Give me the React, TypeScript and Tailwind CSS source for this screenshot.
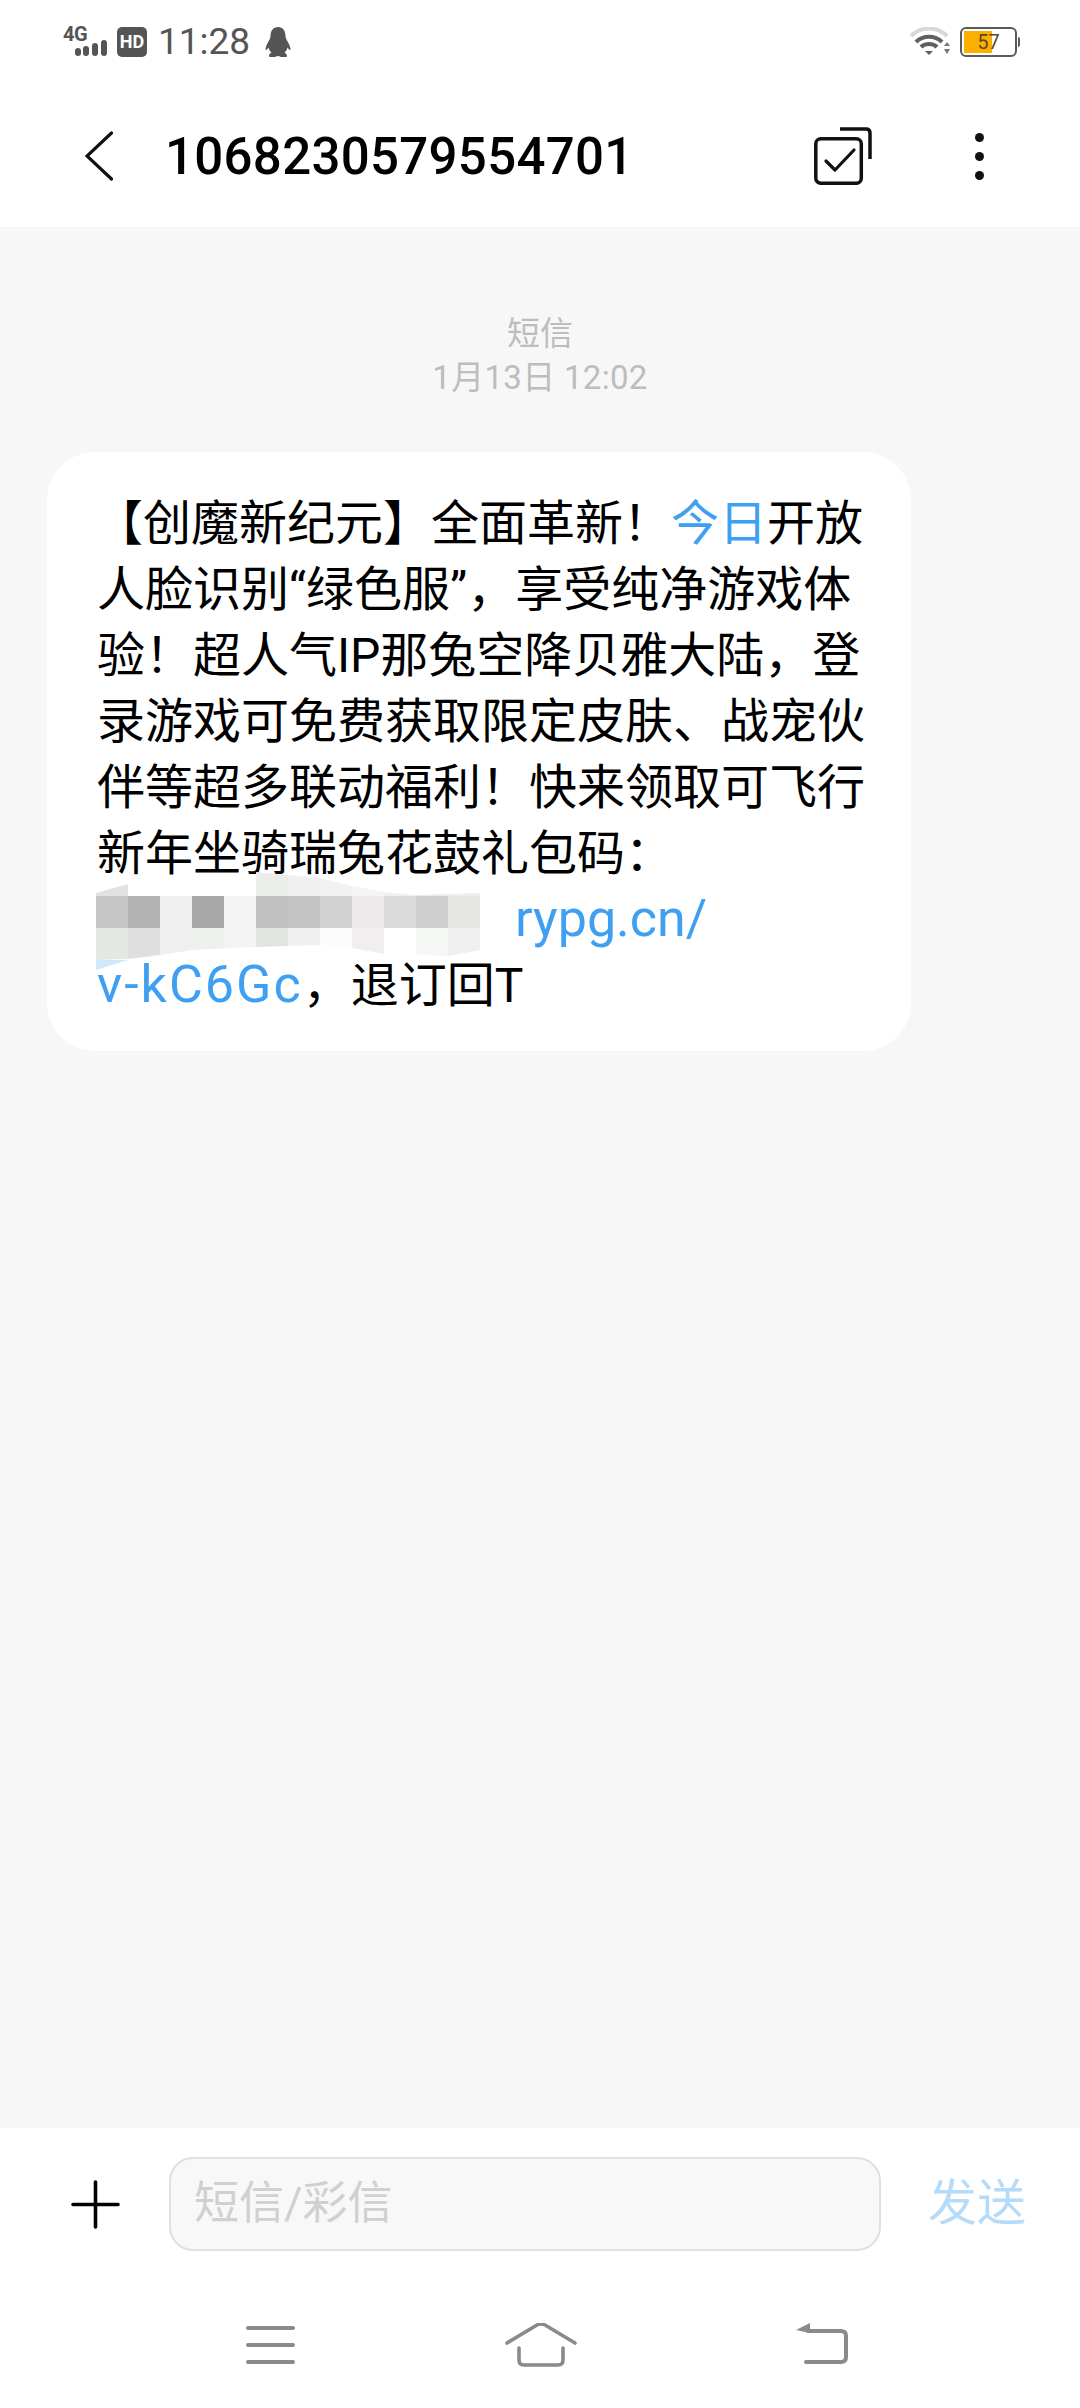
// Pixelated redaction over the sender link
const MOSAIC_ROWS = [
  ['#e2e2e2', '#ffffff', '#ffffff', '#ffffff', '#ffffff', '#ebedeb', '#eff0ef', '#f1f1f1', '#f5f5f5', '#f0f0f0', '#ececec', '#eeeeee'],
  ['#c6c6c6', '#b4b3b4', '#f0f0f0', '#a9a8a9', '#f3f3f3', '#c0c0c0', '#c4c4c4', '#d2d2d2', '#ebe9ea', '#dcdbdc', '#cfcecf', '#e6e7e5'],
  ['#e5e7e5', '#dfdfdf', '#efefef', '#eff1ef', '#f3f4f3', '#e1e4e1', '#f0f0f0', '#fcfcfc', '#f0eeef', '#ffffff', '#f6f8f6', '#efefef'],
];
const ROW_Y = [0, 24, 56];
const ROW_H = [24, 32, 32];

function Mosaic() {
  return (
    <svg className="absolute left-[49px] top-[420px]" width="384" height="100" viewBox="0 0 384 100">
      <defs>
        <clipPath id="mosaic-clip">
          <polygon points="0,21 32,12 32,24 160,24 160,0 224,6 256,14 288,20 320,23 384,21 384,78 352,84 288,82 256,76 224,73 160,75 96,78 64,83 32,87 0,88" />
        </clipPath>
      </defs>
      <g clipPath="url(#mosaic-clip)">
        {MOSAIC_ROWS.map((row, r) =>
          row.map((color, c) => (
            <rect key={`${r}-${c}`} x={c * 32} y={ROW_Y[r]} width="32" height={ROW_H[r]} fill={color} />
          ))
        )}
      </g>
      <polygon points="0,88 32,88 0,98" fill="#cfe8fb" />
    </svg>
  );
}

function SignalIcon() {
  return (
    <div className="relative w-[47px] h-[30px]">
      <span className="absolute left-0 top-[-3px] text-[20px] leading-[20px] font-bold text-[#555] tracking-[-0.5px]">4G</span>
      <svg className="absolute left-0 top-0" width="47" height="30" viewBox="0 0 47 30" fill="#555">
        <rect x="12" y="21" width="6" height="8" rx="3" />
        <rect x="20" y="19" width="6" height="10" rx="3" />
        <rect x="29" y="16" width="6" height="13" rx="3" />
        <rect x="38" y="13" width="6" height="16" rx="3" />
      </svg>
    </div>
  );
}

function PenguinIcon() {
  return (
    <svg width="26" height="30" viewBox="0 0 26 30" fill="#555">
      <path d="M13 0 C8 0 5.5 4 5.5 9 C5.5 10.5 5 11.5 4 13.5 C2.5 16 1 19 0.5 22 L0.5 23 C1.5 23 3 21.5 3.5 20.5 C4 22.5 5 24.5 6.5 25.5 C5 26.5 4 27.5 4 29 L4.5 30 L10 30 Q12 29 13 29 Q14 29 16 30 L21.5 30 L22 29 C22 27.5 21 26.5 19.5 25.5 C21 24.5 22 22.5 22.5 20.5 C23 21.5 24.5 23 25.5 23 L25.5 22 C25 19 23.5 16 22 13.5 C21 11.5 20.5 10.5 20.5 9 C20.5 4 18 0 13 0 Z" />
    </svg>
  );
}

function WifiIcon() {
  return (
    <svg width="40" height="30" viewBox="0 0 40 30" fill="none">
      <path d="M1 9 C11 -1 27 -1 37 9" stroke="#d8d8d8" strokeWidth="4" />
      <path d="M6 15 C13 8 25 8 32 15" stroke="#5f5f5f" strokeWidth="4" />
      <path d="M11 20 C15 16 23 16 27 20" stroke="#5f5f5f" strokeWidth="4" />
      <path d="M15 24 L23 24 L19 28 Z" fill="#5f5f5f" />
      <path d="M34 19 L37 15 L40 19 Z M34 22 L40 22 L37 27 Z" fill="#777" />
    </svg>
  );
}

function Battery() {
  return (
    <div className="flex items-center">
      <div className="relative w-[57px] h-[30px] rounded-[6px] border-2 border-[#5a5a5a] p-[2px] flex">
        <div className="w-[28px] bg-[#fbb000]" />
        <span className="absolute inset-0 flex items-center justify-center text-[20px] leading-none text-[#5a4a20]">57</span>
      </div>
      <div className="w-[2px] h-[10px] ml-[1px] bg-[#5a5a5a] rounded-r-[2px]" />
    </div>
  );
}

function CheckStackIcon() {
  return (
    <svg width="58" height="58" viewBox="0 0 58 58" fill="none" stroke="#111" strokeLinecap="round" strokeLinejoin="round">
      <rect x="1.8" y="11.8" width="45.5" height="44.5" rx="5" strokeWidth="3.5" />
      <path d="M26 2 H52 Q56 2 56 6 V32" strokeWidth="3.5" strokeLinecap="butt" />
      <path d="M12 34 L21 43 L40 23" strokeWidth="3.2" />
    </svg>
  );
}

function App() {
  return (
    <div className="w-[1080px] h-[2408px] flex flex-col bg-[#f7f7f7] font-['Roboto','Noto_Sans_CJK_SC',sans-serif] overflow-hidden">
      {/* Status bar + title */}
      <div className="bg-white h-[227px] shrink-0">
        <div className="h-[85px] pt-[27px] pl-[63px] pr-[60px] flex items-start justify-between">
          <div className="flex items-center">
            <SignalIcon />
            <div className="ml-[7px] w-[30px] h-[30px] rounded-[5px] bg-[#555] flex items-center justify-center text-white text-[18px] font-bold leading-none">HD</div>
            <span className="ml-[11px] text-[37px] leading-[30px] text-[#555]">11:28</span>
            <span className="ml-[15px]">
              <PenguinIcon />
            </span>
          </div>
          <div className="flex items-center gap-[10px]">
            <WifiIcon />
            <Battery />
          </div>
        </div>
        <div className="h-[142px] flex items-center pl-[85px] pr-[96px]">
          <svg width="28" height="50" viewBox="0 0 28 50" fill="none" stroke="#111" strokeWidth="3.2" strokeLinecap="round">
            <path d="M26.5 2 L2 25 L26.5 48" />
          </svg>
          <span className="ml-[52px] text-[51px] tracking-[0.3px] font-medium text-black leading-none">1068230579554701</span>
          <div className="flex-1" />
          <CheckStackIcon />
          <div className="ml-[103px] flex flex-col gap-[10px]">
            <div className="w-[9px] h-[9px] rounded-full bg-[#111]" />
            <div className="w-[9px] h-[9px] rounded-full bg-[#111]" />
            <div className="w-[9px] h-[9px] rounded-full bg-[#111]" />
          </div>
        </div>
      </div>

      {/* Conversation */}
      <div className="flex-1 pt-[85px]">
        <div className="text-center text-[33px] leading-[44px] text-[#bdbdbd]">
          <div>短信</div>
          <div className="tracking-[0.3px]">1月13日 12:02</div>
        </div>
        <div className="relative mt-[52px] ml-[47px] w-[864px] bg-white rounded-[48px] pl-[50px] pt-[39px] pb-[32px] text-[48px] leading-[66px] text-black whitespace-nowrap">
          <div>
            <span className="ml-[-2px]">【创魔新纪元】全面革新！</span>
            <span className="text-[#3f9ff0]">今日</span>开放
          </div>
          <div>人脸识别“绿色服”，享受纯净游戏体</div>
          <div>验！超人气IP那兔空降贝雅大陆，登</div>
          <div>录游戏可免费获取限定皮肤、战宠伙</div>
          <div>伴等超多联动福利！快来领取可飞行</div>
          <div>新年坐骑瑞兔花鼓礼包码：</div>
          <div className="h-[66px]">
            <span className="inline-block w-[418px]" />
            <span className="text-[#3f9ff0] text-[52px] leading-none">rypg.cn/</span>
          </div>
          <div className="h-[66px]">
            <span className="text-[#3f9ff0] text-[52px] leading-none tracking-[2px]">v-kC6Gc</span>，退订回T
          </div>
          <Mosaic />
        </div>
      </div>

      {/* Composer + navigation */}
      <div className="bg-white h-[280px] shrink-0 pt-[29px]">
        <div className="flex items-center h-[94px] pl-[71px]">
          <svg width="49" height="49" viewBox="0 0 49 49" fill="none" stroke="#000" strokeWidth="3.6" strokeLinecap="round">
            <path d="M24.5 2 V47 M2 24.5 H47" />
          </svg>
          <div className="ml-[49px] w-[712px] h-[94px] rounded-[24px] border-2 border-[#e0e0e0] bg-[#f8f8f8] pl-[23px] flex items-center text-[45px] text-[#d0d0d0]">
            短信/彩信
          </div>
          <span className="ml-[47px] text-[49px] text-[#b5dbf8]">发送</span>
        </div>
        <div className="mt-[72px] pl-[246px] flex items-start">
          <svg width="49" height="44" viewBox="0 0 49 44" fill="none" stroke="#8a8a8a" strokeWidth="4" strokeLinecap="round">
            <path d="M2 5 H47 M2 22 H47 M2 39 H47" />
          </svg>
          <svg className="ml-[210px]" width="72" height="44" viewBox="0 0 72 44" fill="none" stroke="#8a8a8a" strokeWidth="3.6" strokeLinecap="round" strokeLinejoin="round">
            <path d="M2 20 L32 2 Q36 0 40 2 L70 20" />
            <path d="M14 25 V37 Q14 42 19 42 H53 Q58 42 58 37 V25" />
          </svg>
          <svg className="ml-[218px]" width="54" height="44" viewBox="0 0 54 44" fill="none" stroke="#8a8a8a" strokeWidth="4" strokeLinecap="round" strokeLinejoin="round">
            <path d="M1 7 L15 0 V10 Z" fill="#8a8a8a" stroke="none" />
            <path d="M13 8 H46 Q51 8 51 13 V34 Q51 39 46 39 H11" />
          </svg>
        </div>
      </div>
    </div>
  );
}

export default App;
